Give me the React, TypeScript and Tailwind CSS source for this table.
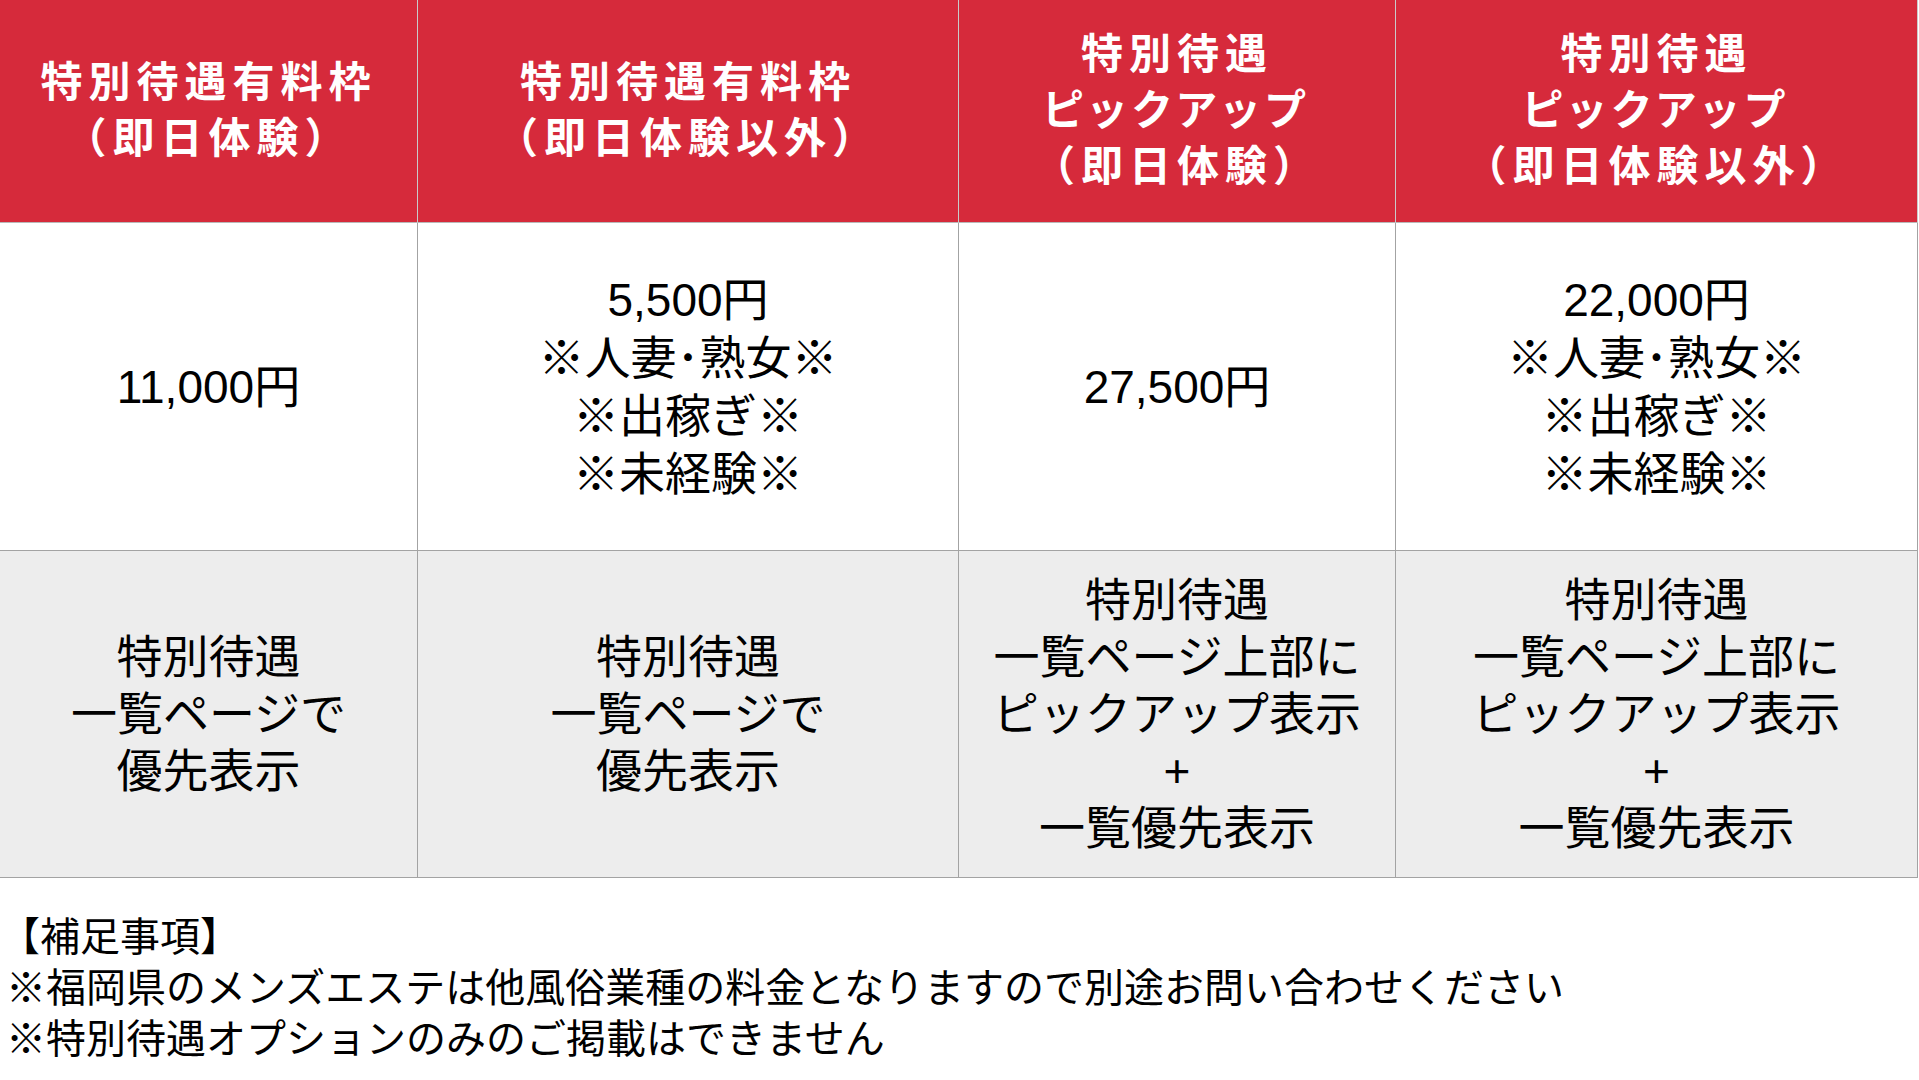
import React from "react";

const font = { fontFamily: '"Liberation Sans", "Noto Sans CJK JP", sans-serif' };

const headers = [
  ["特別待遇有料枠", "（即日体験）"],
  ["特別待遇有料枠", "（即日体験以外）"],
  ["特別待遇", "ピックアップ", "（即日体験）"],
  ["特別待遇", "ピックアップ", "（即日体験以外）"],
];

const prices = [
  ["11,000円"],
  ["5,500円", "※人妻･熟女※", "※出稼ぎ※", "※未経験※"],
  ["27,500円"],
  ["22,000円", "※人妻･熟女※", "※出稼ぎ※", "※未経験※"],
];

const features = [
  ["特別待遇", "一覧ページで", "優先表示"],
  ["特別待遇", "一覧ページで", "優先表示"],
  ["特別待遇", "一覧ページ上部に", "ピックアップ表示", "+", "一覧優先表示"],
  ["特別待遇", "一覧ページ上部に", "ピックアップ表示", "+", "一覧優先表示"],
];

export default function App() {
  return (
    <div className="w-[1919px] h-[1080px] bg-white overflow-hidden" style={font}>
      <div className="grid w-[1918px] grid-cols-[418px_541px_437px_522px] grid-rows-[223px_328px_327px]">
        {headers.map((h, i) => (
          <div
            key={"h" + i}
            className="flex flex-col items-center justify-center bg-[#d62a3b] text-white font-bold text-[42px] leading-[56px] tracking-[6px] border-b border-[#b9b9b9] border-r border-r-[#c9c9c9]"
          >
            {h.map((l, j) => (
              <div
                key={j}
                className={l === "ピックアップ" ? "[font-feature-settings:'palt'] tracking-[7px]" : ""}
              >
                {l}
              </div>
            ))}
          </div>
        ))}
        {prices.map((p, i) => (
          <div
            key={"p" + i}
            className="flex flex-col items-center justify-center bg-white text-black text-[46px] leading-[58px] border-b border-r border-[#a3a3a3]"
          >
            {p.map((l, j) => (
              <div key={j}>{l}</div>
            ))}
          </div>
        ))}
        {features.map((f, i) => (
          <div
            key={"f" + i}
            className="flex flex-col items-center justify-center bg-[#ededed] text-black text-[46px] leading-[57px] border-b border-r border-[#a3a3a3]"
          >
            {f.map((l, j) => (
              <div key={j}>{l}</div>
            ))}
          </div>
        ))}
      </div>
      <div className="mt-[34px] pl-[6px] text-black text-[40px] leading-[51px]">
        <div className="-ml-[6px]">【補足事項】</div>
        <div>※福岡県のメンズエステは他風俗業種の料金となりますので別途お問い合わせください</div>
        <div>※特別待遇オプションのみのご掲載はできません</div>
      </div>
    </div>
  );
}
